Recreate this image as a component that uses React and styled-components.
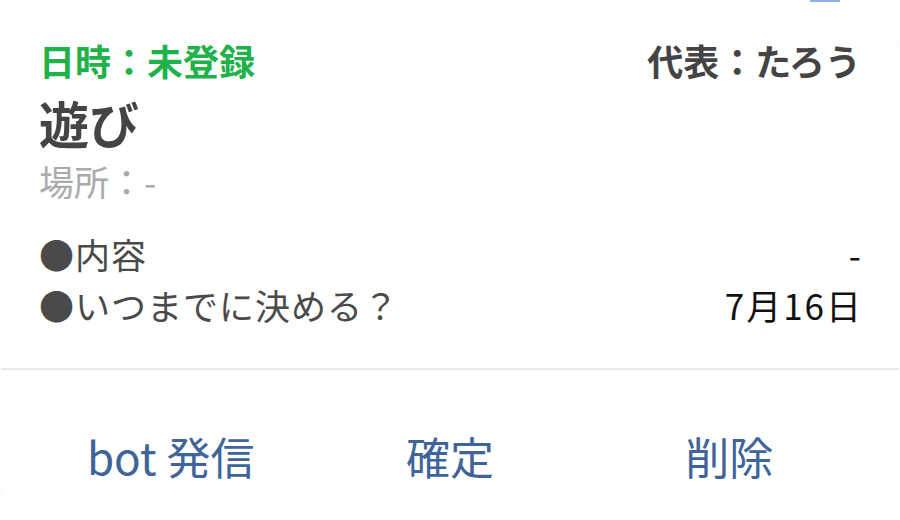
import React from "react";
import styled, { createGlobalStyle } from "styled-components";

const GlobalStyle = createGlobalStyle`
  body {
    margin: 0;
    background: #ffffff;
    font-family: "Noto Sans CJK JP", "Noto Sans", sans-serif;
  }
`;

const Page = styled.div`
  width: 900px;
  height: 520px;
  display: flex;
  flex-direction: column;
  overflow: hidden;
`;

const TopStrip = styled.div`
  height: 20px;
  display: flex;
  justify-content: flex-end;
  align-items: flex-start;
  padding-right: 60px;
`;

const StripMark = styled.span`
  width: 30px;
  height: 2px;
  background: #8eaee6;
`;

const Card = styled.section`
  margin: 0 1px 2px 1px;
  flex: 1;
  display: flex;
  flex-direction: column;
  background: #fff;
  border-radius: 34px;
  box-shadow: 0 0 1px rgba(140, 165, 220, 0.22);
  overflow: hidden;
`;

const Body = styled.div`
  padding: 18px 38px 38px 38px;
  display: flex;
  flex-direction: column;
`;

const HeaderRow = styled.div`
  display: flex;
  justify-content: space-between;
  font-size: 36px;
  line-height: 44px;
  font-weight: 700;
`;

const Status = styled.span`
  color: #1fb14a;
`;

const Owner = styled.span`
  color: #444;
`;

const Title = styled.h1`
  margin: 9px 0 0;
  font-size: 50px;
  line-height: 62px;
  font-weight: 700;
  color: #444;
`;

const Place = styled.div`
  margin-top: 6px;
  font-size: 35px;
  line-height: 44px;
  color: #aaa;
`;

const Details = styled.div`
  margin-top: 25px;
  display: flex;
  flex-direction: column;
`;

const DetailRow = styled.div`
  display: flex;
  justify-content: space-between;
  align-items: center;
  font-size: 35px;
  line-height: 51px;
`;

const Label = styled.span`
  color: #4a4a4a;
  letter-spacing: 1px;
`;

const Value = styled.span`
  color: #111;
  letter-spacing: 2px;
  margin-right: -2px;
`;

const Divider = styled.hr`
  margin: 0;
  border: none;
  height: 2px;
  background: #e8e8e8;
`;

const Actions = styled.div`
  flex: 1;
  display: grid;
  grid-template-columns: repeat(3, 1fr);
  padding: 56px 30px 0 30px;
`;

const ActionButton = styled.button`
  border: none;
  background: none;
  padding: 0;
  font-family: inherit;
  font-size: 44px;
  line-height: 60px;
  height: 60px;
  color: #3e649a;
  text-align: center;
  cursor: pointer;
`;

const details = [
  { label: "●内容", value: "-" },
  { label: "●いつまでに決める？", value: "7月16日" }
];

const actions = ["bot 発信", "確定", "削除"];

export default function App() {
  return (
    <Page>
      <GlobalStyle />
      <TopStrip>
        <StripMark />
      </TopStrip>
      <Card>
        <Body>
          <HeaderRow>
            <Status>日時：未登録</Status>
            <Owner>代表：たろう</Owner>
          </HeaderRow>
          <Title>遊び</Title>
          <Place>場所：-</Place>
          <Details>
            {details.map(d => (
              <DetailRow key={d.label}>
                <Label>{d.label}</Label>
                <Value>{d.value}</Value>
              </DetailRow>
            ))}
          </Details>
        </Body>
        <Divider />
        <Actions>
          {actions.map(a => (
            <ActionButton key={a}>{a}</ActionButton>
          ))}
        </Actions>
      </Card>
    </Page>
  );
}
